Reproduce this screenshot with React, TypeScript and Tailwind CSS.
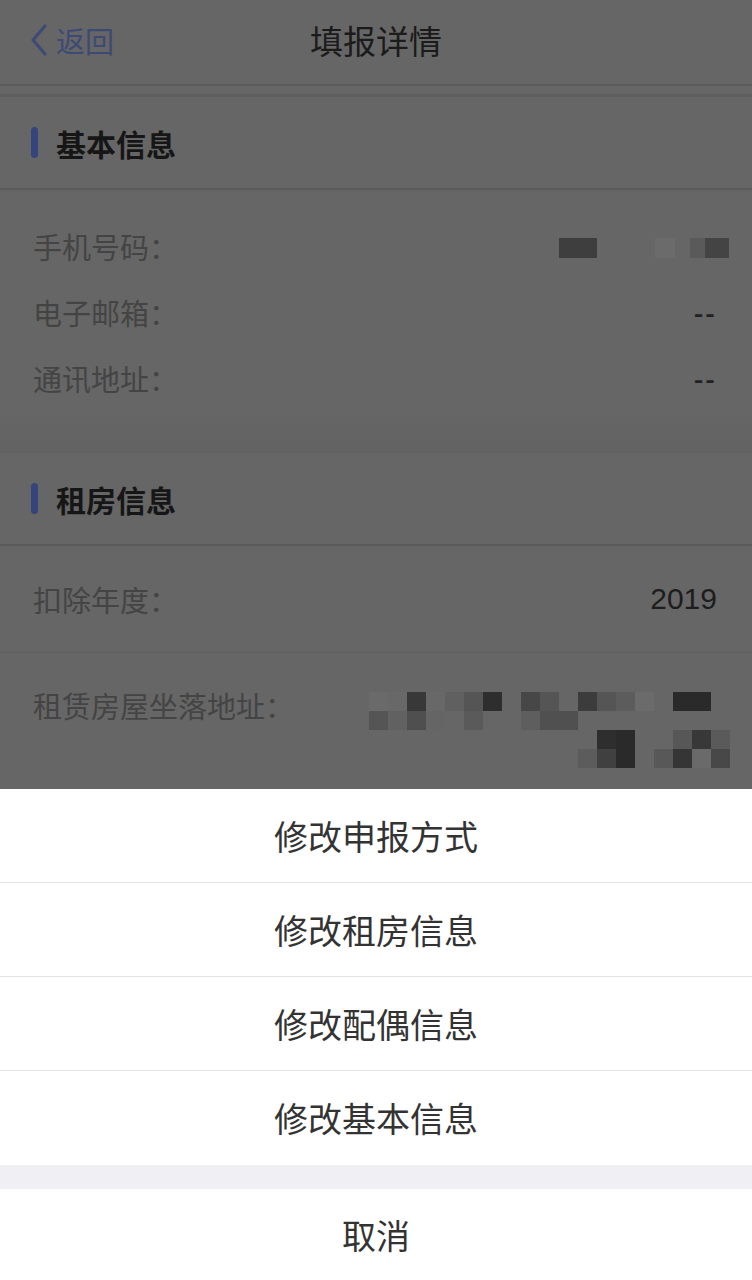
import React from "react";

const font = { fontFamily: '"Noto Sans CJK SC", "Noto Sans", sans-serif' };

type Cell = [number, string];

function MosaicRow({ cells }: { cells: Cell[] }) {
  return (
    <div className="flex h-[19px]">
      {cells.map(([w, c], i) => (
        <div key={i} className="h-full" style={{ width: w, background: c }} />
      ))}
    </div>
  );
}

function SectionHeader({ title }: { title: string }) {
  return (
    <div className="flex items-center h-[93px] border-b-2 border-[#5a5a5a] pl-[31px]">
      <div className="w-[7px] h-[31px] rounded-full bg-[#34457e]" />
      <span className="ml-[18px] text-[30px] font-bold text-[#161616] leading-none">{title}</span>
    </div>
  );
}

function InfoRow({ label, value }: { label: string; value: React.ReactNode }) {
  return (
    <div className="flex items-center justify-between h-[66px] pl-[33px] pr-[35px]">
      <span className="text-[29px] text-[#444444] leading-none">{label}</span>
      {value}
    </div>
  );
}

const items = ["修改申报方式", "修改租房信息", "修改配偶信息", "修改基本信息"];

export default function App() {
  const b = "#666666";
  return (
    <div className="relative w-[752px] h-[1280px] overflow-hidden bg-[#666666]" style={font}>
      {/* nav */}
      <div className="relative flex items-center h-[86px] border-b-2 border-[#5b5b5b] pb-[4px]">
        <div className="flex items-center pl-[28px] text-[#3d4a75]">
          <svg width="22" height="34" viewBox="0 0 22 34" fill="none">
            <path d="M17 3 L5 17 L17 31" stroke="#3d4a75" strokeWidth="3.2" strokeLinecap="round" strokeLinejoin="round" />
          </svg>
          <span className="ml-[6px] text-[29px] leading-none">返回</span>
        </div>
        <div className="absolute inset-x-0 text-center text-[33px] text-[#1b1b1b] leading-none pointer-events-none">
          填报详情
        </div>
      </div>
      <div className="h-[11px] border-b-[3px] border-[#5e5e5e]" />

      <SectionHeader title="基本信息" />
      <div className="pt-[23px]">
        <InfoRow
          label="手机号码："
          value={
            <div className="flex items-center h-[20px] mt-[4px] mr-[-12px]">
              <div className="w-[38px] h-[20px] bg-[#3e3e3e]" />
              <div className="w-[58px]" />
              <div className="w-[20px] h-[20px] bg-[#6b6b6b]" />
              <div className="w-[15px]" />
              <div className="w-[15px] h-[20px] bg-[#5a5a5a]" />
              <div className="w-[24px] h-[20px] bg-[#444444]" />
            </div>
          }
        />
        <InfoRow
          label="电子邮箱："
          value={<span className="text-[26px] font-bold tracking-[2px] text-[#222] leading-none">--</span>}
        />
        <InfoRow
          label="通讯地址："
          value={<span className="text-[26px] font-bold tracking-[2px] text-[#222] leading-none">--</span>}
        />
      </div>
      <div className="h-[42px] bg-gradient-to-b from-[#666666] to-[#626262]" />

      <SectionHeader title="租房信息" />
      <div className="flex items-center justify-between h-[107px] pl-[33px] pr-[35px] border-b border-[#5f5f5f]">
        <span className="text-[29px] text-[#444444] leading-none">扣除年度：</span>
        <span className="text-[30px] text-[#1d1d1d] leading-none" style={{ fontFamily: '"Liberation Sans", sans-serif' }}>
          2019
        </span>
      </div>
      <div className="flex items-start justify-between pl-[33px] pr-[41px] pt-[38px]">
        <span className="text-[29px] text-[#444444] leading-none">租赁房屋坐落地址：</span>
        <div className="flex flex-col items-end mt-[1px]">
          <div className="flex flex-col">
            <MosaicRow
              cells={[
                [19, "#6a6a6a"], [19, "#686868"], [19, "#383838"], [19, "#686868"], [19, "#606060"], [19, "#555555"],
                [19, "#2e2e2e"], [19, b], [19, "#474747"], [19, "#555555"], [19, b], [19, "#3c3c3c"],
                [19, "#555555"], [19, "#5c5c5c"], [19, "#6b6b6b"], [19, b], [38, "#2a2a2a"],
              ]}
            />
            <MosaicRow
              cells={[
                [19, "#555555"], [19, "#616161"], [19, "#4f4f4f"], [19, "#656565"], [19, "#666666"], [19, "#5a5a5a"],
                [19, b], [19, b], [19, "#5e5e5e"], [19, "#505050"], [19, "#505050"], [19, b],
                [19, b], [19, b], [19, b], [19, b], [38, b],
              ]}
            />
          </div>
          <div className="flex flex-col mr-[-19px]">
            <MosaicRow
              cells={[
                [19, b], [19, "#2e2e2e"], [19, "#2a2a2a"], [19, b], [19, b], [19, "#575757"], [19, "#383838"], [19, "#5a5a5a"],
              ]}
            />
            <MosaicRow
              cells={[
                [19, "#5c5c5c"], [19, "#404040"], [19, "#2a2a2a"], [19, b], [19, "#585858"], [19, "#353535"], [19, "#6a6a6a"], [19, "#484848"],
              ]}
            />
          </div>
        </div>
      </div>

      {/* action sheet */}
      <div className="absolute left-0 right-0 bottom-0 top-[789px] flex flex-col bg-[#efeff4]">
        {items.map((t, i) => (
          <div
            key={t}
            className={`flex items-center justify-center h-[94px] bg-white text-[34px] text-[#333333] leading-none ${
              i < items.length - 1 ? "border-b border-[#e3e3e3]" : ""
            }`}
          >
            {t}
          </div>
        ))}
        <div className="h-[24px] bg-[#efeff4]" />
        <div className="flex-1 flex items-center justify-center bg-white text-[34px] text-[#333333] leading-none">
          取消
        </div>
      </div>
    </div>
  );
}
